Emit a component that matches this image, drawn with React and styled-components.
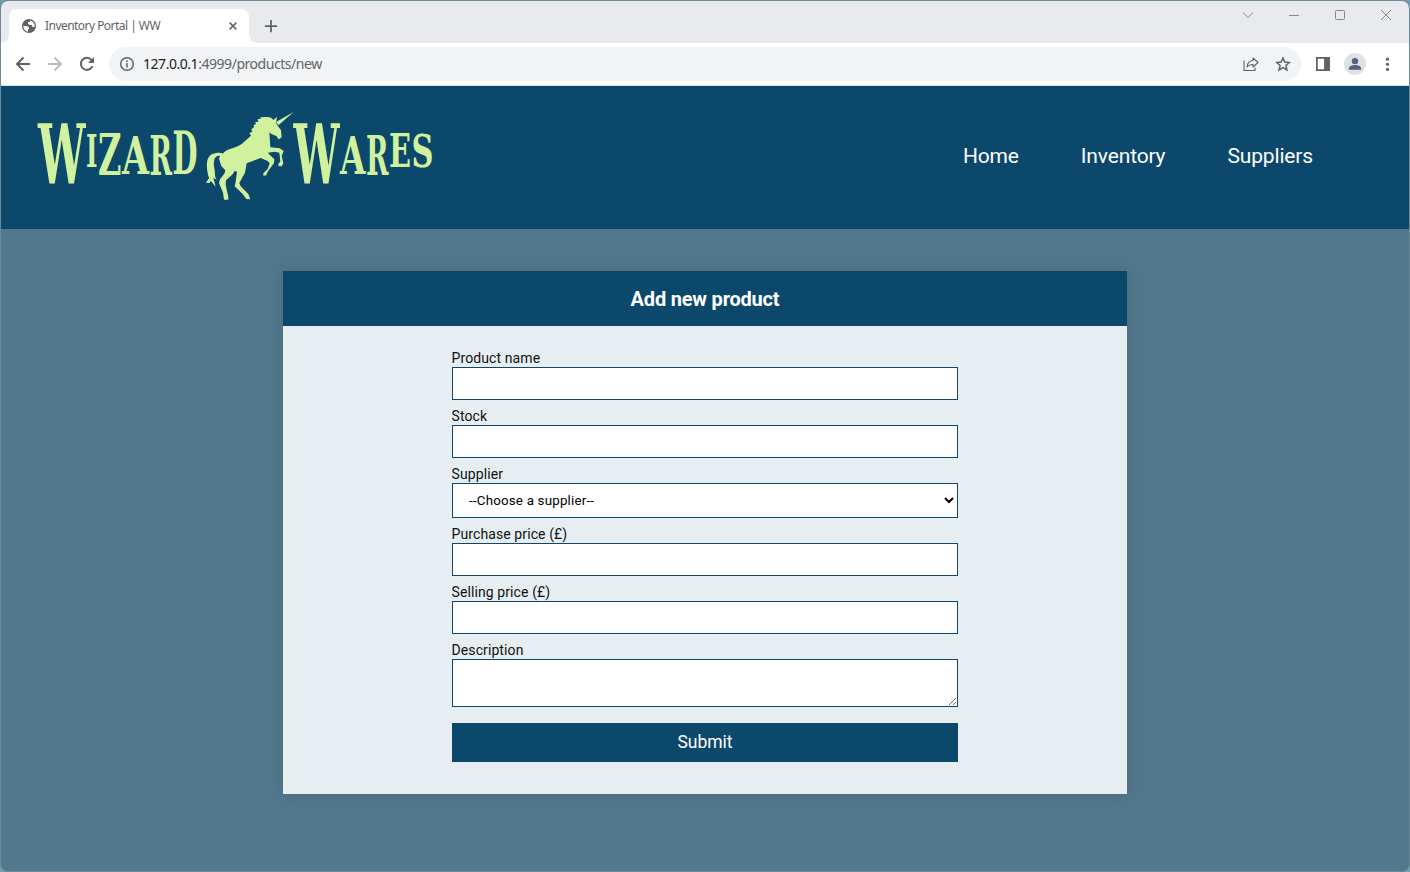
import React from "react";
import styled, { createGlobalStyle } from "styled-components";

const navy = "#0c486b";
const lime = "#d0f29e";

const Global = createGlobalStyle`
  * { box-sizing: border-box; }
  html, body { margin: 0; padding: 0; background: #6e9db0; }
  body { width: 1410px; height: 872px; overflow: hidden; font-family: Roboto, "Liberation Sans", sans-serif; }
`;
const Window = styled.div`
  width: 1410px;
  height: 872px;
  display: flex;
  flex-direction: column;
  border: 1px solid #6c8a97;
  border-radius: 8px;
  overflow: hidden;
  background: #52788e;
`;
const TabStrip = styled.div`
  height: 42px;
  flex: none;
  background: #e8eaed;
  display: flex;
  padding: 8px 0 0 8px;
`;
const Tab = styled.div`
  width: 240px;
  height: 34px;
  background: #fff;
  border-radius: 8px 8px 0 0;
  display: flex;
  align-items: center;
  padding: 0 10px 0 12px;
  position: relative;
  &::before, &::after {
    content: "";
    position: absolute;
    bottom: 0;
    width: 8px;
    height: 8px;
  }
  &::before { left: -8px; background: radial-gradient(circle at 0 0, transparent 7.5px, #fff 8px); }
  &::after { right: -8px; background: radial-gradient(circle at 100% 0, transparent 7.5px, #fff 8px); }
`;
const TabTitle = styled.span`
  flex: 1;
  margin-left: 8px;
  font: 12px/16px "Noto Sans", "Open Sans", sans-serif;
  letter-spacing: -0.54px;
  color: #5f6368;
`;
const NewTab = styled.div`
  margin: 9px 0 0 15px;
  height: 14px;
`;
const WindowButtons = styled.div`
  margin-left: auto;
  display: flex;
  gap: 30px;
  padding-right: 15px;
  margin-top: -2px;
`;
const Toolbar = styled.div`
  height: 43px;
  flex: none;
  background: #fff;
  border-bottom: 1px solid #dcdfe2;
  display: flex;
  align-items: center;
  padding: 0 14px 0 14px;
`;
const NavButtons = styled.div`
  display: flex;
  gap: 16px;
  margin-right: 14px;
`;
const AddressBar = styled.div`
  width: 1192px;
  height: 34px;
  border-radius: 17px;
  background: #f1f3f4;
  display: flex;
  align-items: center;
  padding: 0 10px;
`;
const Address = styled.span`
  flex: 1;
  margin-left: 8px;
  font: 14px/20px "Noto Sans", "Open Sans", sans-serif;
  letter-spacing: -0.46px;
  color: #5f6368;
  b { font-weight: 400; color: #202124; }
`;
const AddressActions = styled.div`
  display: flex;
  gap: 16px;
`;
const ToolbarActions = styled.div`
  display: flex;
  align-items: center;
  margin-left: 14px;
  gap: 13px;
`;
const Avatar = styled.div`
  width: 22px;
  height: 22px;
  border-radius: 50%;
  background: #dee1e6;
  display: flex;
  align-items: center;
  justify-content: center;
`;
const SiteHeader = styled.header`
  height: 143px;
  flex: none;
  background: ${navy};
  display: flex;
  align-items: center;
  justify-content: space-between;
  padding: 0 96px 0 29px;
`;
const LogoWord = styled.text`
  font-family: "DejaVu Serif", serif;
  font-weight: 700;
`;
const SiteNav = styled.nav`
  display: flex;
  gap: 62px;
`;
const NavLink = styled.a`
  color: #fff;
  font-size: 21px;
  line-height: 28px;
  letter-spacing: -0.15px;
  margin-top: -4px;
`;
const Main = styled.main`
  flex: 1;
  display: flex;
  justify-content: center;
  align-items: flex-start;
  padding-top: 42px;
`;
const Card = styled.section`
  width: 844px;
  height: 523px;
  background: #e6eef1;
  box-shadow: 0 0 16px rgba(60, 75, 75, 0.32);
`;
const CardTitle = styled.h1`
  margin: 0;
  height: 55px;
  padding-top: 1px;
  background: ${navy};
  color: #fff;
  font-size: 20px;
  line-height: 54px;
  font-weight: 700;
  letter-spacing: -0.2px;
  text-align: center;
`;
const Form = styled.form`
  width: 506px;
  margin: 0 auto;
  padding-top: 24px;
  display: flex;
  flex-direction: column;
`;
const Field = styled.label`
  display: flex;
  flex-direction: column;
  margin-bottom: ${(p) => p.$gap || 8}px;
  font-size: 14px;
  line-height: 17px;
  letter-spacing: 0.1px;
  text-indent: -0.5px;
  color: #111;
`;
const Input = styled.input`
  height: 33px;
  border: 1px solid ${navy};
  border-radius: 0;
  background: #fff;
  padding: 8px 16px;
  margin: 0;
`;
const Select = styled.select`
  height: 35px;
  border: 1px solid ${navy};
  border-radius: 0;
  background: #fff;
  padding: 0 1px 0 12px;
  margin: 0;
  color: #000;
  font: 13.333px Roboto, sans-serif;
  letter-spacing: 0.2px;
`;
const TextArea = styled.textarea`
  height: 48px;
  border: 1px solid ${navy};
  background: #fff;
  padding: 8px 16px;
  margin: 0;
  resize: both;
`;
const Submit = styled.button`
  height: 39px;
  border: 0;
  background: ${navy};
  color: #fff;
  font: 17.5px Roboto, sans-serif;
  padding: 0 0 2px;
`;

const Icon = ({ size = 16, color = "#5f6368", w = 2, children }) => (
  <svg width={size} height={size} viewBox="0 0 16 16" fill="none" stroke={color} strokeWidth={w}>
    {children}
  </svg>
);

// The lettering is condensed: letters are set in a horizontally squeezed group.
const SQUEEZE = 0.54;

// Each letter: character, left edge, width, baseline, font size.
const wizard = [
  ["W", 38, 47.5, 183, 82],
  ["I", 86, 11.5, 167, 44],
  ["Z", 98, 23.5, 175, 58],
  ["A", 122, 27, 174, 53],
  ["R", 149.5, 22.5, 175, 54],
  ["D", 172.5, 25, 174.5, 59],
];
const wares = [
  ["W", 293.5, 46, 183, 82],
  ["A", 340, 25.5, 174, 53],
  ["R", 366, 22.5, 175, 54],
  ["E", 389, 22, 167.5, 46],
  ["S", 411.5, 22, 167.5, 45],
];

const Word = ({ letters }) => (
  <LogoWord transform={`scale(${SQUEEZE} 1)`}>
    {letters.map(([c, x, width, y, size]) => (
      <tspan
        key={c}
        x={x / SQUEEZE}
        y={y}
        fontSize={size}
        textLength={width / SQUEEZE}
        lengthAdjust="spacingAndGlyphs"
      >
        {c}
      </tspan>
    ))}
  </LogoWord>
);

const Logo = () => (
  <svg width="410" height="113" viewBox="30 101 410 113" fill={lime} aria-label="Wizard Wares">
    <Word letters={wizard} />
    <Word letters={wares} />
    <g transform="translate(195 100) scale(.33333)">
      <path d="M296 36L243 66L250 76Z" />
      <path d="M245 73L258 91L260 112L251 118L244 108L229 102L223 97L226 142L254 145L266 153L260 168L265 190L260 199L251 199L250 192L256 184L253 158L239 155L218 158L238 178L237 189L218 215L214 226L205 227L205 220L218 207L224 190L218 183L197 174L155 190L150 218L133 249L137 259L160 282L166 298L154 297L143 282L119 259L122 245L126 215L119 213L113 223L93 241L92 254L100 291L100 299L87 299L84 278L72 249L75 238L88 221L91 211L79 198L72 176L75 168C61 164 53 181 58 205C61 221 58 229 65 239L55 233L62 260L47 242L44 249L33 248L42 235C33 205 29 164 61 160C78 155 81 164 86 158C97 145 127 143 141 131L168 107L163 99L172 95L169 88L177 82L176 75L184 72L180 66L190 65L188 57L198 56L196 52L212 51C224 50 231 53 235 60L246 50L243 69Z" />
    </g>
  </svg>
);

const fields = ["Purchase price (£)", "Selling price (£)"];

export default function App() {
  return (
    <>
      <Global />
      <Window>
        <TabStrip>
          <Tab>
            <Icon w={1}>
              <circle cx="8" cy="8" r="7" fill="#5f6368" stroke="none" />
              <path d="M2.3 8H6l2 1.5V11l-1 .5v2.2A6 6 0 0 1 2.3 8ZM9 2.5V4H7v2l2 1h2l.5 2H13.7A6 6 0 0 0 9 2.5Z" fill="#fff" stroke="none" />
            </Icon>
            <TabTitle>Inventory Portal | WW</TabTitle>
            <Icon size={12}><path d="M3.5 3.5l9 9M12.5 3.5l-9 9" /></Icon>
          </Tab>
          <NewTab><Icon size={14}><path d="M8 1v14M1 8h14" /></Icon></NewTab>
          <WindowButtons>
            <Icon color="#85888c" w={1}><path d="M3 5.5l5 5 5-5" /></Icon>
            <Icon color="#85888c" w={1}><path d="M3 8.5h10" /></Icon>
            <Icon color="#85888c" w={1}><rect x="3.5" y="3.5" width="9" height="9" rx="1" /></Icon>
            <Icon color="#85888c" w={1}><path d="M3 3l10 10M13 3L3 13" /></Icon>
          </WindowButtons>
        </TabStrip>
        <Toolbar>
          <NavButtons>
            <Icon><path d="M15 8H2M8.5 1.5L2 8l6.5 6.5" /></Icon>
            <Icon color="#babcbe"><path d="M1 8h13M7.5 1.5L14 8l-6.5 6.5" /></Icon>
            <Icon><path d="M13.5 10A6 6 0 1 1 12.5 4" /><path d="M15 1v6H9Z" fill="#5f6368" stroke="none" /></Icon>
          </NavButtons>
          <AddressBar>
            <Icon w={1.5}><circle cx="8" cy="8" r="6.3" /><path d="M8 7v4.5M8 4.3v1.6" /></Icon>
            <Address><b>127.0.0.1</b>:4999/products/new</Address>
            <AddressActions>
              <Icon w={1.1}>
                <path d="M1 4.5v10h11v-3" />
                <path d="M10 2l5 4.5-5 4.5V8.5C7 8.5 5.5 9 4 11c.3-3.5 2-6 6-6.5Z" strokeLinejoin="round" />
              </Icon>
              <Icon w={1.5}><path d="M8 2l1.8 4.1 4.5.4-3.4 3 1 4.4L8 11.6l-3.9 2.3 1-4.4-3.4-3 4.5-.4Z" /></Icon>
            </AddressActions>
          </AddressBar>
          <ToolbarActions>
            <Icon w={1.8}><path d="M1.9 1.9h12.2v12.2H1.9z" /><path d="M10 2h4v12h-4z" fill="#5f6368" /></Icon>
            <Avatar>
              <Icon size={14}><g fill="#56617a" stroke="none"><circle cx="8" cy="4.7" r="3.7" /><path d="M1 14.5v-1.5c0-2.7 4-4 7-4s7 1.3 7 4v1.5Z" /></g></Icon>
            </Avatar>
            <Icon><g fill="#5f6368" stroke="none"><circle cx="8.5" cy="3.2" r="1.6" /><circle cx="8.5" cy="8.3" r="1.6" /><circle cx="8.5" cy="13.4" r="1.6" /></g></Icon>
          </ToolbarActions>
        </Toolbar>
        <SiteHeader>
          <Logo />
          <SiteNav>
            <NavLink>Home</NavLink>
            <NavLink>Inventory</NavLink>
            <NavLink>Suppliers</NavLink>
          </SiteNav>
        </SiteHeader>
        <Main>
          <Card>
            <CardTitle>Add new product</CardTitle>
            <Form>
              <Field>Product name<Input /></Field>
              <Field>Stock<Input /></Field>
              <Field>Supplier
                <Select><option>--Choose a supplier--</option></Select>
              </Field>
              {fields.map((f) => <Field key={f}>{f}<Input /></Field>)}
              <Field $gap={16}>Description<TextArea /></Field>
              <Submit type="button">Submit</Submit>
            </Form>
          </Card>
        </Main>
      </Window>
    </>
  );
}
